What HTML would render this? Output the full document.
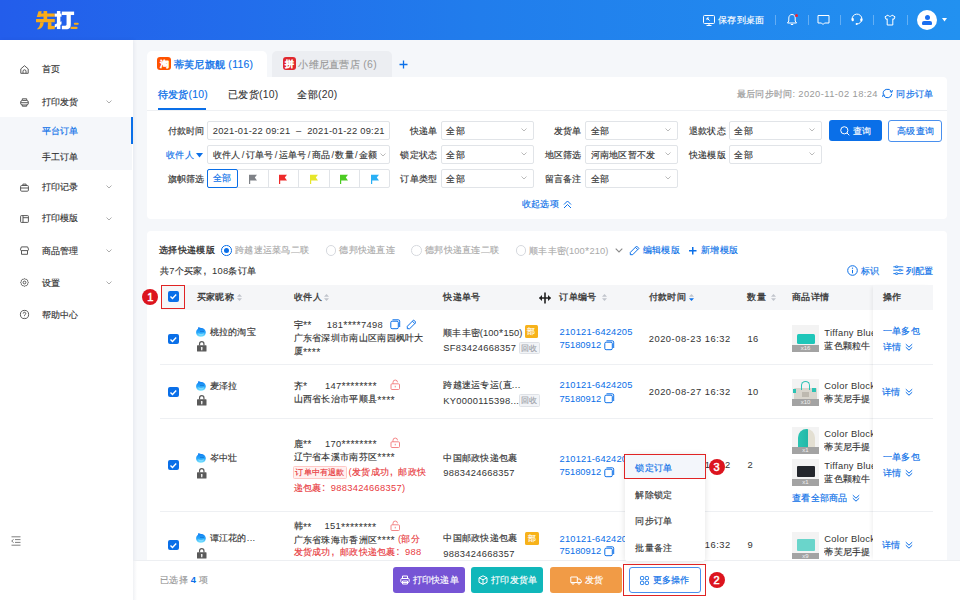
<!DOCTYPE html>
<html><head><meta charset="utf-8"><style>
*{box-sizing:border-box;margin:0;padding:0}
html,body{width:960px;height:600px;overflow:hidden}
body{font-family:"Liberation Sans",sans-serif;font-size:9.33px;letter-spacing:.3px;color:#333;background:#f5f7fa;position:relative}
.a{position:absolute;white-space:nowrap}
svg.a{overflow:visible}
.st{letter-spacing:.3px;font-size:10.6px;position:relative;top:1.3px}
.inp{position:absolute;height:18.5px;border:1px solid #e1e4e8;border-radius:2px;background:#fff;line-height:18.2px;padding-left:4.5px;color:#333;overflow:hidden;white-space:nowrap}
.inp .ch{position:absolute;right:6px;top:6px;line-height:0}
.cbx{position:absolute;width:10.7px;height:10.7px;background:#0a6fe8;border-radius:2px;line-height:0}
.tm{letter-spacing:.52px}
.c{-webkit-text-stroke:.15px}
.fw{font-style:normal;display:inline-block;width:9.2px;padding-left:.8px;font-size:10px;-webkit-text-stroke:.2px}
.m .c{-webkit-text-stroke:.3px}
.m{-webkit-text-stroke:.1px}
.on{letter-spacing:.17px}
.sl{font-style:normal;margin:0 1.1px}
</style></head><body>
<div class="a" style="left:0;top:0;width:960px;height:40px;background:linear-gradient(90deg,#235deb 0%,#217dec 50%,#2291f0 100%)"></div>
<svg class="a" style="left:30px;top:5px" width="55" height="30.02" viewBox="0 0 960 524"><g fill="#f9ac1a"><path d="M118 210L148 110H205L178 210Z"/><rect x="160" y="148" width="272" height="56"/><rect x="236" y="105" width="64" height="150"/><rect x="105" y="245" width="327" height="56"/><path d="M178 300H240C236 372 200 412 150 422H118C160 392 178 352 178 300Z"/><rect x="312" y="300" width="62" height="122"/><rect x="312" y="366" width="120" height="56"/><rect x="765" y="308" width="86" height="38" rx="19"/><rect x="705" y="380" width="126" height="40" rx="20"/></g><g fill="#fff"><rect x="432" y="150" width="118" height="54"/><rect x="470" y="105" width="60" height="315"/><path d="M432 340L550 282V336L432 392Z"/><rect x="555" y="115" width="215" height="60"/><path d="M638 170H712V330C712 395 690 422 630 422H556V362H618C632 362 638 356 638 342Z"/></g></svg>
<svg class="a" style="left:703px;top:14.5px" width="12" height="11" viewBox="0 0 12 11" fill="none" stroke="#fff" stroke-width="1"><rect x="0.5" y="0.5" width="11" height="8" rx="1"/><path d="M3.5 10.5h5M6 8.5v2M4 3l2.5 2.5M4 3h2M4 3v2"/></svg>
<div class="a" style="left:718px;top:13px;line-height:14px;color:#fff"><span class="c">保存到桌面</span></div>
<div class="a" style="left:775px;top:15px;width:1px;height:10px;background:rgba(255,255,255,.3)"></div>
<div class="a" style="left:807.5px;top:15px;width:1px;height:10px;background:rgba(255,255,255,.3)"></div>
<div class="a" style="left:840px;top:15px;width:1px;height:10px;background:rgba(255,255,255,.3)"></div>
<div class="a" style="left:873px;top:15px;width:1px;height:10px;background:rgba(255,255,255,.3)"></div>
<div class="a" style="left:906.5px;top:15px;width:1px;height:10px;background:rgba(255,255,255,.3)"></div>
<svg class="a" style="left:786px;top:13px" width="12" height="13" viewBox="0 0 12 13" fill="none" stroke="#fff" stroke-width="1"><path d="M6 1.5c-2 0-3.2 1.6-3.2 3.5v3L1.5 10h9L9.2 8V5C9.2 3.1 8 1.5 6 1.5z"/><path d="M4.8 11.5h2.4"/></svg>
<div class="a" style="left:794.5px;top:13.5px;width:3px;height:3px;border-radius:50%;background:#f5222d"></div>
<svg class="a" style="left:817px;top:14px" width="13" height="12" viewBox="0 0 13 12" fill="none" stroke="#fff" stroke-width="1"><path d="M1 1.5h11v7.5H7.5L6 10.5 4.5 9H1z"/></svg>
<svg class="a" style="left:850.6px;top:13.2px" width="12" height="13" viewBox="0 0 12 13" fill="none" stroke="#fff" stroke-width="1"><path d="M1.17 6.85A4.9 4.9 0 1 1 5.57 10.88"/><rect x=".6" y="4.9" width="2.2" height="3.4" rx="1" fill="#fff" stroke="none"/><rect x="9.3" y="5.2" width="2.1" height="3.2" rx="1" fill="#fff" stroke="none"/><circle cx="5.6" cy="10.9" r="1" fill="#fff" stroke="none"/></svg>
<svg class="a" style="left:883.5px;top:14px" width="12" height="12" viewBox="0 0 12 12" fill="none" stroke="#fff" stroke-width="1"><path d="M4 1L1 2.8 2 5.3l1.2-.5V11h5.6V4.8l1.2.5 1-2.5L8 1C7.5 2 6.8 2.4 6 2.4S4.5 2 4 1z"/></svg>
<div class="a" style="left:917px;top:10px;width:20px;height:20px;border-radius:50%;background:#fff"></div>
<div class="a" style="left:924.6px;top:15px;width:5px;height:5px;border-radius:50%;background:#1a6ef0"></div>
<div class="a" style="left:922.2px;top:21.2px;width:9.8px;height:3.8px;border-radius:2px 2px 1px 1px;background:#1a6ef0"></div>
<svg class="a" style="left:941.5px;top:18px" width="5" height="4" viewBox="0 0 5 4"><path d="M0 0h5L2.5 3.5z" fill="#fff"/></svg>
<div class="a" style="left:0;top:40px;width:133px;height:560px;background:#fff;box-shadow:1px 0 4px rgba(0,30,80,.07)"></div>
<div class="a" style="left:0;top:117px;width:132.3px;height:53px;background:#f5f7fa"></div>
<div class="a" style="left:131px;top:117px;width:2px;height:26.7px;background:#0a6fe8"></div>
<svg class="a" style="left:19.8px;top:64.9px" width="9" height="9" viewBox="0 0 9 9" fill="none" stroke="#505050" stroke-width=".95" stroke-linejoin="round"><path d="M.8 3.9L4.5.7l3.7 3.2v4.4H.8z"/><path d="M3 8.3V6.3a1.5 1.5 0 0 1 3 0v2"/></svg>
<div class="a " style="left:41.5px;top:62.30px;line-height:14px;font-size:9.33px;color:#333;"><span class="c">首页</span></div>

<svg class="a" style="left:19.9px;top:97.6px" width="9" height="9" viewBox="0 0 9 9" fill="none" stroke="#505050" stroke-width=".95" stroke-linejoin="round"><path d="M2.3 2.4V.8h4.4v1.6"/><rect x=".6" y="2.4" width="7.8" height="4.6" rx="1.9"/><path d="M.8 4.7h7.4M2.3 6.6v1.6h4.4V6.6"/></svg>
<div class="a " style="left:41.5px;top:94.60px;line-height:14px;font-size:9.33px;color:#333;"><span class="c">打印发货</span></div>

<svg class="a" style="left:106px;top:100.0px" width="6" height="4" viewBox="0 0 6 4" fill="none" stroke="#999" stroke-width=".8"><path d="M.5.5L3 3 5.5.5"/></svg>
<svg class="a" style="left:19.7px;top:182.9px" width="9" height="9" viewBox="0 0 9 9" fill="none" stroke="#505050" stroke-width=".95" stroke-linejoin="round"><rect x=".6" y="2.5" width="7.8" height="5.7" rx="1"/><path d="M2.9 2.5V1.1h3.2v1.4M.6 5h7.8"/></svg>
<div class="a " style="left:41.5px;top:179.70px;line-height:14px;font-size:9.33px;color:#333;"><span class="c">打印记录</span></div>

<svg class="a" style="left:106px;top:185.1px" width="6" height="4" viewBox="0 0 6 4" fill="none" stroke="#999" stroke-width=".8"><path d="M.5.5L3 3 5.5.5"/></svg>
<svg class="a" style="left:19.7px;top:214.6px" width="9" height="9" viewBox="0 0 9 9" fill="none" stroke="#505050" stroke-width=".95" stroke-linejoin="round"><rect x=".6" y=".6" width="7.8" height="6.8" rx=".7"/><path d="M3 .6v6.8M3 2.7h5.4"/></svg>
<div class="a " style="left:41.5px;top:211.30px;line-height:14px;font-size:9.33px;color:#333;"><span class="c">打印模版</span></div>

<svg class="a" style="left:106px;top:216.7px" width="6" height="4" viewBox="0 0 6 4" fill="none" stroke="#999" stroke-width=".8"><path d="M.5.5L3 3 5.5.5"/></svg>
<svg class="a" style="left:19.5px;top:246.2px" width="9" height="9" viewBox="0 0 9 9" fill="none" stroke="#505050" stroke-width=".95" stroke-linejoin="round"><path d="M1.4.9h6.2l.9 2.3a1.2 1.2 0 0 1-1.2 1.4H1.7A1.2 1.2 0 0 1 .5 3.2z"/><path d="M1.5 4.6v3.7h6V4.6"/></svg>
<div class="a " style="left:41.5px;top:243.70px;line-height:14px;font-size:9.33px;color:#333;"><span class="c">商品管理</span></div>

<svg class="a" style="left:106px;top:249.1px" width="6" height="4" viewBox="0 0 6 4" fill="none" stroke="#999" stroke-width=".8"><path d="M.5.5L3 3 5.5.5"/></svg>
<svg class="a" style="left:19.6px;top:278.2px" width="9" height="9" viewBox="0 0 9 9" fill="none" stroke="#505050" stroke-width=".95" stroke-linejoin="round"><path d="M7.55 5.76A1.45 1.45 0 0 1 5.76 7.55A1.45 1.45 0 0 1 3.24 7.55A1.45 1.45 0 0 1 1.45 5.76A1.45 1.45 0 0 1 1.45 3.24A1.45 1.45 0 0 1 3.24 1.45A1.45 1.45 0 0 1 5.76 1.45A1.45 1.45 0 0 1 7.55 3.24A1.45 1.45 0 0 1 7.55 5.76Z"/><circle cx="4.5" cy="4.5" r="1.4"/></svg>
<div class="a " style="left:41.5px;top:275.70px;line-height:14px;font-size:9.33px;color:#333;"><span class="c">设置</span></div>

<svg class="a" style="left:106px;top:281.1px" width="6" height="4" viewBox="0 0 6 4" fill="none" stroke="#999" stroke-width=".8"><path d="M.5.5L3 3 5.5.5"/></svg>
<svg class="a" style="left:19.5px;top:310px" width="9" height="9" viewBox="0 0 9 9" fill="none" stroke="#505050" stroke-width=".95" stroke-linejoin="round"><circle cx="4.5" cy="4.5" r="4.1"/><path d="M3.2 3.5a1.3 1.3 0 1 1 1.9 1.2c-.4.2-.6.5-.6.9v.4"/><circle cx="4.5" cy="7" r=".35" fill="#505050" stroke="none"/></svg>
<div class="a " style="left:41.5px;top:307.70px;line-height:14px;font-size:9.33px;color:#333;"><span class="c">帮助中心</span></div>

<div class="a " style="left:41.5px;top:123.60px;line-height:14px;font-size:9.33px;color:#0a6fe8;"><span class="c">平台订单</span></div>

<div class="a " style="left:41.5px;top:150.40px;line-height:14px;font-size:9.33px;color:#333;"><span class="c">手工订单</span></div>

<svg class="a" style="left:11.25px;top:536.25px" width="10" height="10" viewBox="0 0 10 10" fill="none" stroke="#606060" stroke-width=".8"><path d="M.5 .8h9M4 3.6h5.5M4 6.4h5.5M.5 9.2h9"/><path d="M2.6 3.4L.7 5l1.9 1.6"/></svg>
<div class="a" style="left:146.7px;top:51px;width:120px;height:27px;background:#fff;border-radius:5px 5px 0 0"></div>
<div class="a" style="left:157.2px;top:56.7px;width:13.8px;height:13.8px;border-radius:3px;background:#ff5200;color:#fff;font-size:9px;font-weight:bold;line-height:14.5px;text-align:center;letter-spacing:0"><span class="c">淘</span></div>
<div class="a m" style="left:173.7px;top:57.00px;line-height:15px;font-size:9.33px;color:#0a6fe8;font-size:10.4px;letter-spacing:.3px"><span class="c">蒂芙尼旗舰</span> (116)</div>

<div class="a" style="left:272px;top:51px;width:119.5px;height:26px;background:#eceef2;border-radius:5px 5px 0 0"></div>
<div class="a" style="left:282.7px;top:57.2px;width:13.3px;height:13.3px;border-radius:3px;background:#e0282e;color:#fff;font-size:9px;font-weight:bold;line-height:14px;text-align:center;letter-spacing:0"><span class="c">拼</span></div>
<div class="a " style="left:298.3px;top:57.00px;line-height:15px;font-size:9.33px;color:#999;font-size:10.4px;letter-spacing:.3px"><span class="c">小维尼直营店</span> (6)</div>

<svg class="a" style="left:399px;top:59.5px" width="9" height="9" viewBox="0 0 9 9" stroke="#0a6fe8" stroke-width="1.3"><path d="M4.5 .5v8M.5 4.5h8"/></svg>
<div class="a" style="left:147px;top:77px;width:799.7px;height:141.7px;background:#fff;border-radius:0 4px 4px 4px"></div>
<div class="a m" style="left:157.5px;top:86.70px;line-height:15px;font-size:9.33px;color:#0a6fe8;font-size:10.4px;letter-spacing:.3px"><span class="c">待发货</span>(10)</div>

<div class="a " style="left:228px;top:86.70px;line-height:15px;font-size:9.33px;color:#333;font-size:10.4px;letter-spacing:.3px"><span class="c">已发货</span>(10)</div>

<div class="a " style="left:297.3px;top:86.70px;line-height:15px;font-size:9.33px;color:#333;font-size:10.4px;letter-spacing:.3px"><span class="c">全部</span>(20)</div>

<div class="a" style="left:147px;top:110.3px;width:799.7px;height:1px;background:#eef0f3"></div>
<div class="a" style="left:157.5px;top:108.3px;width:48px;height:2px;background:#0a6fe8"></div>
<div class="a " style="left:736.7px;top:87.20px;line-height:14px;font-size:9.33px;color:#999;"><span class="c">最后同步时间</span>: <span style="letter-spacing:.42px">2020-11-02 18:24</span></div>

<svg class="a" style="left:882.4px;top:88.3px" width="11" height="11" viewBox="0 0 11 11" fill="none" stroke="#0a6fe8" stroke-width="1"><path d="M1.27 6.25A4.3 4.3 0 0 1 9.4 3.68M9.78 5.87A4.3 4.3 0 0 1 1.6 7.32"/><path d="M10.4 2.1L9.9 4.3 7.9 3.6" stroke-linejoin="round"/><path d="M.6 8.9L1.1 6.7 3.1 7.4" stroke-linejoin="round"/></svg>
<div class="a " style="left:896.3px;top:87.20px;line-height:14px;font-size:9.33px;color:#0a6fe8;"><span class="c">同步订单</span></div>

<div class="a " style="left:167.5px;top:123.80px;line-height:14px;font-size:9.33px;color:#333;"><span class="c">付款时间</span></div>

<div class="a " style="left:166px;top:147.80px;line-height:14px;font-size:9.33px;color:#0a6fe8;"><span class="c">收件人</span></div>

<svg class="a" style="left:195.5px;top:152.5px" width="7" height="5" viewBox="0 0 7 5"><path d="M0 0h7L3.5 4.5z" fill="#0a6fe8"/></svg>
<div class="a " style="left:167.5px;top:171.80px;line-height:14px;font-size:9.33px;color:#333;"><span class="c">旗帜筛选</span></div>

<div class="inp" style="left:207.2px;top:121.3px;width:182.5px;letter-spacing:.25px">2021-01-22 09:21 &nbsp;&ndash;&nbsp; 2021-01-22 09:21</div>
<div class="inp" style="left:207.2px;top:145.3px;width:182.5px"><span class="c">收件人</span><i class="sl">/</i><span class="c">订单号</span><i class="sl">/</i><span class="c">运单号</span><i class="sl">/</i><span class="c">商品</span><i class="sl">/</i><span class="c">数量</span><i class="sl">/</i><span class="c">金额</span><span class="ch" style="right:3px;top:7px"><svg width="6" height="4" viewBox="0 0 6 4" fill="none" stroke="#aaa" stroke-width=".8"><path d="M.5.5L3 3 5.5.5"/></svg></span></div>
<div class="a" style="left:207.2px;top:169.2px;width:182.5px;height:18.6px;border:1px solid #e1e4e8;border-radius:2px;background:#fff"></div>
<div class="a" style="left:207.2px;top:169.2px;width:30.6px;height:18.6px;border:1px solid #0a6fe8;border-radius:2px;color:#0a6fe8;text-align:center;line-height:17.6px"><span class="c">全部</span></div>
<div class="a" style="left:267.5px;top:170px;width:1px;height:17px;background:#e1e4e8"></div>
<div class="a" style="left:297.5px;top:170px;width:1px;height:17px;background:#e1e4e8"></div>
<div class="a" style="left:328.7px;top:170px;width:1px;height:17px;background:#e1e4e8"></div>
<div class="a" style="left:359.2px;top:170px;width:1px;height:17px;background:#e1e4e8"></div>
<svg class="a" style="left:248px;top:173.5px" width="10" height="10" viewBox="0 0 10 10"><path d="M1 .8h8L6.8 3.6 9 6.4H2.2V10H1z" fill="#7f8287"/></svg>
<svg class="a" style="left:278px;top:173.5px" width="10" height="10" viewBox="0 0 10 10"><path d="M1 .8h8L6.8 3.6 9 6.4H2.2V10H1z" fill="#ee2a2a"/></svg>
<svg class="a" style="left:308.5px;top:173.5px" width="10" height="10" viewBox="0 0 10 10"><path d="M1 .8h8L6.8 3.6 9 6.4H2.2V10H1z" fill="#e6e62a"/></svg>
<svg class="a" style="left:339px;top:173.5px" width="10" height="10" viewBox="0 0 10 10"><path d="M1 .8h8L6.8 3.6 9 6.4H2.2V10H1z" fill="#4ccb22"/></svg>
<svg class="a" style="left:369.5px;top:173.5px" width="10" height="10" viewBox="0 0 10 10"><path d="M1 .8h8L6.8 3.6 9 6.4H2.2V10H1z" fill="#2ab0f5"/></svg>
<div class="a" style="right:522.50px;top:123.80px;line-height:14px;color:#333;"><span class="c">快递单</span></div>

<div class="a" style="right:522.50px;top:147.80px;line-height:14px;color:#333;"><span class="c">锁定状态</span></div>

<div class="a" style="right:522.50px;top:171.80px;line-height:14px;color:#333;"><span class="c">订单类型</span></div>

<div class="a" style="right:378.30px;top:123.80px;line-height:14px;color:#333;"><span class="c">发货单</span></div>

<div class="a" style="right:378.30px;top:147.80px;line-height:14px;color:#333;"><span class="c">地区筛选</span></div>

<div class="a" style="right:378.30px;top:171.80px;line-height:14px;color:#333;"><span class="c">留言备注</span></div>

<div class="a" style="right:234.20px;top:123.80px;line-height:14px;color:#333;"><span class="c">退款状态</span></div>

<div class="a" style="right:234.20px;top:147.80px;line-height:14px;color:#333;"><span class="c">快递模版</span></div>

<div class="inp" style="left:440.8px;top:121.3px;width:92.9px"><span class="c">全部</span><span class="ch"><svg width="6" height="4" viewBox="0 0 6 4" fill="none" stroke="#aaa" stroke-width=".8"><path d="M.5.5L3 3 5.5.5"/></svg></span></div>
<div class="inp" style="left:440.8px;top:145.3px;width:92.9px"><span class="c">全部</span><span class="ch"><svg width="6" height="4" viewBox="0 0 6 4" fill="none" stroke="#aaa" stroke-width=".8"><path d="M.5.5L3 3 5.5.5"/></svg></span></div>
<div class="inp" style="left:440.8px;top:169.3px;width:92.9px"><span class="c">全部</span><span class="ch"><svg width="6" height="4" viewBox="0 0 6 4" fill="none" stroke="#aaa" stroke-width=".8"><path d="M.5.5L3 3 5.5.5"/></svg></span></div>
<div class="inp" style="left:585px;top:121.3px;width:92.5px"><span class="c">全部</span><span class="ch"><svg width="6" height="4" viewBox="0 0 6 4" fill="none" stroke="#aaa" stroke-width=".8"><path d="M.5.5L3 3 5.5.5"/></svg></span></div>
<div class="inp" style="left:585px;top:145.3px;width:92.5px"><span class="c">河南地区暂不发</span><span class="ch"><svg width="6" height="4" viewBox="0 0 6 4" fill="none" stroke="#aaa" stroke-width=".8"><path d="M.5.5L3 3 5.5.5"/></svg></span></div>
<div class="inp" style="left:585px;top:169.3px;width:92.5px"><span class="c">全部</span><span class="ch"><svg width="6" height="4" viewBox="0 0 6 4" fill="none" stroke="#aaa" stroke-width=".8"><path d="M.5.5L3 3 5.5.5"/></svg></span></div>
<div class="inp" style="left:728.8px;top:121.3px;width:92.9px"><span class="c">全部</span><span class="ch"><svg width="6" height="4" viewBox="0 0 6 4" fill="none" stroke="#aaa" stroke-width=".8"><path d="M.5.5L3 3 5.5.5"/></svg></span></div>
<div class="inp" style="left:728.8px;top:145.3px;width:92.9px"><span class="c">全部</span><span class="ch"><svg width="6" height="4" viewBox="0 0 6 4" fill="none" stroke="#aaa" stroke-width=".8"><path d="M.5.5L3 3 5.5.5"/></svg></span></div>
<div class="a" style="left:828.8px;top:120px;width:53.1px;height:21.2px;background:#0a6fe8;border-radius:3px"></div>
<svg class="a" style="left:839.5px;top:125.5px" width="10" height="10" viewBox="0 0 10 10" fill="none" stroke="#fff" stroke-width="1"><circle cx="4.3" cy="4.3" r="3.6"/><path d="M6.9 6.9L9.3 9.3"/></svg>
<div class="a " style="left:853px;top:123.60px;line-height:14px;font-size:9.33px;color:#fff;"><span class="c">查询</span></div>

<div class="a" style="left:888.3px;top:120px;width:53.7px;height:21.5px;border:1px solid #4a90ee;border-radius:3px;background:#fff"></div>
<div class="a " style="left:897px;top:123.80px;line-height:14px;font-size:9.33px;color:#0a6fe8;"><span class="c">高级查询</span></div>

<div class="a " style="left:521.7px;top:197.20px;line-height:14px;font-size:9.33px;color:#0a6fe8;"><span class="c">收起选项</span></div>

<svg class="a" style="left:562.5px;top:199.5px" width="9" height="9" viewBox="0 0 9 9" fill="none" stroke="#0a6fe8" stroke-width="1"><path d="M1 4.5L4.5 1 8 4.5M1 8L4.5 4.5 8 8"/></svg>
<div class="a" style="left:147px;top:231.3px;width:799.7px;height:400px;background:#fff;border-radius:4px"></div>
<div class="a m" style="left:159.2px;top:243.00px;line-height:14px;font-size:9.33px;color:#333;"><span class="c">选择快递模版</span></div>

<div class="a" style="left:221px;top:245px;width:10.6px;height:10.6px;border-radius:50%;border:1px solid #0a6fe8;background:#fff"></div><div class="a" style="left:223.6px;top:247.6px;width:5.4px;height:5.4px;border-radius:50%;background:#0a6fe8"></div>
<div class="a " style="left:235px;top:243.00px;line-height:14px;font-size:9.33px;color:#aaa;"><span class="c">跨越速运菜鸟二联</span></div>

<div class="a" style="left:325.7px;top:245px;width:10.6px;height:10.6px;border-radius:50%;border:1px solid #d6d9de;background:#fff"></div>
<div class="a " style="left:339.3px;top:243.00px;line-height:14px;font-size:9.33px;color:#aaa;"><span class="c">德邦快递直连</span></div>

<div class="a" style="left:411.4px;top:245px;width:10.6px;height:10.6px;border-radius:50%;border:1px solid #d6d9de;background:#fff"></div>
<div class="a " style="left:425px;top:243.00px;line-height:14px;font-size:9.33px;color:#aaa;"><span class="c">德邦快递直连二联</span></div>

<div class="a" style="left:515.7px;top:245px;width:10.6px;height:10.6px;border-radius:50%;border:1px solid #d6d9de;background:#fff"></div>
<div class="a " style="left:529.3px;top:243.00px;line-height:14px;font-size:9.33px;color:#aaa;letter-spacing:.12px"><span class="c">顺丰丰密</span>(100<span class="st">*</span>210)</div>

<svg class="a" style="left:614.5px;top:247.8px" width="8" height="5" viewBox="0 0 8 5" fill="none" stroke="#8a8a8a" stroke-width="1.1"><path d="M.7.7L4 4 7.3.7"/></svg>
<svg class="a" style="left:629px;top:244.5px" width="11" height="11" viewBox="0 0 11 11" fill="none" stroke="#0a6fe8" stroke-width="1"><path d="M7.6 1.1l2.3 2.3-6.2 6.3H1.3V7.4z M6.4 2.3l2.3 2.3"/></svg>
<div class="a " style="left:642.7px;top:243.00px;line-height:14px;font-size:9.33px;color:#0a6fe8;"><span class="c">编辑模版</span></div>

<svg class="a" style="left:689px;top:246.5px" width="7.5" height="7.5" viewBox="0 0 7.5 7.5" stroke="#0a6fe8" stroke-width="1.5"><path d="M3.75 0v7.5M0 3.75h7.5"/></svg>
<div class="a " style="left:701px;top:243.00px;line-height:14px;font-size:9.33px;color:#0a6fe8;"><span class="c">新增模版</span></div>

<div class="a " style="left:160px;top:263.80px;line-height:14px;font-size:9.33px;color:#333;"><span class="c">共</span>7<span class="c">个买家</span><i class="fw">,</i>108<span class="c">条订单</span></div>

<svg class="a" style="left:847px;top:265.2px" width="11" height="11" viewBox="0 0 11 11" fill="none" stroke="#0a6fe8" stroke-width="1"><circle cx="5.5" cy="5.5" r="4.8"/><path d="M5.5 4.9v3.4"/><circle cx="5.5" cy="3.2" r=".65" fill="#0a6fe8" stroke="none"/></svg>
<div class="a " style="left:861.2px;top:263.60px;line-height:14px;font-size:9.33px;color:#0a6fe8;"><span class="c">标识</span></div>

<svg class="a" style="left:892.8px;top:265.3px" width="10.5" height="10.5" viewBox="0 0 10.5 10.5" fill="none" stroke="#0a6fe8" stroke-width=".9"><path d="M.3 1.8h10M.3 5.2h10M.3 8.6h10"/><rect x="2.3" y="1" width="2.6" height="1.6" rx=".8" fill="#fff"/><rect x="5.8" y="4.4" width="2.6" height="1.6" rx=".8" fill="#fff"/><rect x="2.3" y="7.8" width="2.6" height="1.6" rx=".8" fill="#fff"/></svg>
<div class="a " style="left:905.9px;top:263.60px;line-height:14px;font-size:9.33px;color:#0a6fe8;"><span class="c">列配置</span></div>

<div class="a" style="left:161px;top:285px;width:772px;height:25px;background:#f5f6f8"></div>
<div class="cbx" style="left:168px;top:291.40px"><svg width="10.7" height="10.7" viewBox="0 0 10.7 10.7"><path d="M2.5 5.4l2 2 3.7-3.9" fill="none" stroke="#fff" stroke-width="1.4"/></svg></div>
<div class="a m" style="left:196.7px;top:290.20px;line-height:14px;font-size:9.33px;color:#333;"><span class="c">买家昵称</span></div>
<svg class="a" style="left:236.5px;top:294.0px" width="5" height="7" viewBox="0 0 5 7"><path d="M2.5 0L5 2.7H0z" fill="#c0c4cc"/><path d="M2.5 7L5 4.3H0z" fill="#c0c4cc"/></svg>
<div class="a m" style="left:294px;top:290.20px;line-height:14px;font-size:9.33px;color:#333;"><span class="c">收件人</span></div>
<svg class="a" style="left:323.5px;top:294.0px" width="5" height="7" viewBox="0 0 5 7"><path d="M2.5 0L5 2.7H0z" fill="#c0c4cc"/><path d="M2.5 7L5 4.3H0z" fill="#c0c4cc"/></svg>
<div class="a m" style="left:443.3px;top:290.20px;line-height:14px;font-size:9.33px;color:#333;"><span class="c">快递单号</span></div>

<svg class="a" style="left:538px;top:290.5px" width="14" height="14" viewBox="0 0 14 14"><path d="M7 1.5v11M1.5 7h11" stroke="#222" stroke-width="1.6"/><path d="M1 7l3-3v6zM13 7l-3-3v6z" fill="#222"/></svg>
<div class="a m" style="left:559.3px;top:290.20px;line-height:14px;font-size:9.33px;color:#333;"><span class="c">订单编号</span></div>
<svg class="a" style="left:601.5px;top:294.0px" width="5" height="7" viewBox="0 0 5 7"><path d="M2.5 0L5 2.7H0z" fill="#c0c4cc"/><path d="M2.5 7L5 4.3H0z" fill="#c0c4cc"/></svg>
<div class="a m" style="left:648.7px;top:290.20px;line-height:14px;font-size:9.33px;color:#333;"><span class="c">付款时间</span></div>
<svg class="a" style="left:688.5px;top:294.0px" width="5" height="7" viewBox="0 0 5 7"><path d="M2.5 0L5 2.7H0z" fill="#c0c4cc"/><path d="M2.5 7L5 4.3H0z" fill="#0a6fe8"/></svg>
<div class="a m" style="left:747.4px;top:290.20px;line-height:14px;font-size:9.33px;color:#333;"><span class="c">数量</span></div>
<svg class="a" style="left:771px;top:294.0px" width="5" height="7" viewBox="0 0 5 7"><path d="M2.5 0L5 2.7H0z" fill="#c0c4cc"/><path d="M2.5 7L5 4.3H0z" fill="#c0c4cc"/></svg>
<div class="a m" style="left:792px;top:290.20px;line-height:14px;font-size:9.33px;color:#333;"><span class="c">商品详情</span></div>

<div class="a" style="left:160.4px;top:364.4px;width:773px;height:1px;background:#eef0f3"></div>
<div class="a" style="left:160.4px;top:418.4px;width:773px;height:1px;background:#eef0f3"></div>
<div class="a" style="left:160.4px;top:511px;width:773px;height:1px;background:#eef0f3"></div>
<div class="cbx" style="left:168px;top:333.50px"><svg width="10.7" height="10.7" viewBox="0 0 10.7 10.7"><path d="M2.5 5.4l2 2 3.7-3.9" fill="none" stroke="#fff" stroke-width="1.4"/></svg></div><svg class="a" style="left:196.4px;top:327px" width="10" height="10" viewBox="0 0 10 10"><defs><linearGradient id="g3270" x1="0" y1="0" x2="0" y2="1"><stop offset="0" stop-color="#0f7af2"/><stop offset=".55" stop-color="#28a8fb"/><stop offset="1" stop-color="#7fe6ff"/></linearGradient></defs><path d="M2.6 .1C3.2.6 3.9.9 5 .9c2.7 0 4.8 1.9 4.8 4.5S7.7 9.8 5 9.8.1 7.9.1 5.4C.1 3.8.9 2.5 2 1.8 2 1.2 2.2.5 2.6.1z" fill="url(#g3270)"/><circle cx="5" cy="4.3" r=".55" fill="#0a4fb0"/><circle cx="7" cy="4.3" r=".55" fill="#0a4fb0"/><path d="M2.3 6.8Q5 9 7.9 6.8" stroke="#c6f6ff" stroke-width=".7" fill="none" opacity=".7"/></svg><div class="a " style="left:209.6px;top:325.00px;line-height:14px;font-size:9.33px;color:#333;"><span class="c">桃拉的淘宝</span></div>
<svg class="a" style="left:196.75px;top:341.25px" width="9.5" height="10.5" viewBox="0 0 9.5 10.5"><path d="M2.55 4.6V2.9a2.2 2.2 0 0 1 4.4 0v1.7" fill="none" stroke="#5a5a5a" stroke-width="1.2"/><rect x="0" y="4.25" width="9.5" height="6.25" rx=".6" fill="#5a5a5a"/><circle cx="4.75" cy="6.9" r=".9" fill="#fff"/><path d="M4.35 7.2h.8l.3 2h-1.4z" fill="#fff"/></svg>
<div class="a " style="left:293.6px;top:316.70px;line-height:14px;font-size:9.33px;color:#333;"><span class="c">宇</span><span class="st">**</span></div>
<div class="a " style="left:326.8px;top:316.70px;line-height:14px;font-size:9.33px;color:#333;">181<span class="st">****</span>7498</div>
<svg class="a" style="left:389.8px;top:318.5px" width="10.5" height="10.5" viewBox="0 0 10.5 10.5" fill="none" stroke="#0a6fe8" stroke-width="1"><rect x=".8" y="2.2" width="7.5" height="7.5" rx="1.3"/><path d="M2.5 .8h5.8a1.4 1.4 0 0 1 1.4 1.4V8"/></svg>
<svg class="a" style="left:405.5px;top:318.5px" width="11" height="11" viewBox="0 0 11 11" fill="none" stroke="#0a6fe8" stroke-width="1"><path d="M7.6 1l2.4 2.4-6.3 6.3H1.3V7.3z M6.4 2.2l2.4 2.4"/></svg>
<div class="a " style="left:293.6px;top:330.90px;line-height:14px;font-size:9.33px;color:#333;"><span class="c">广东省深圳市南山区南园枫叶大</span></div>
<div class="a " style="left:293.6px;top:343.30px;line-height:14px;font-size:9.33px;color:#333;"><span class="c">厦</span><span class="st">****</span></div>

<div class="a " style="left:443.3px;top:324.90px;line-height:14px;font-size:9.33px;color:#333;letter-spacing:.12px"><span class="c">顺丰丰密</span>(100<span class="st">*</span>150)</div>
<div class="a" style="left:524.6px;top:325.2px;width:13.5px;height:13.3px;background:#f7b21a;border-radius:1.5px;color:#fff;font-size:8px;line-height:13.3px;text-align:center;letter-spacing:0"><span class="c">部</span></div>
<div class="a " style="left:443.3px;top:341.10px;line-height:14px;font-size:9.33px;color:#333;">SF83424668357</div>
<div class="a" style="left:519px;top:341.7px;width:20.8px;height:12.7px;background:#f2f4f7;border:1px solid #dfe2e7;border-radius:1.5px;color:#9ea3aa;font-size:7.5px;line-height:11px;text-align:center;letter-spacing:0"><span class="c">回收</span></div>
<div class="a " style="left:559.6px;top:324.90px;line-height:14px;font-size:9.33px;color:#0a6fe8;"><span class="on">210121-6424205</span></div>
<div class="a " style="left:559.6px;top:338.40px;line-height:14px;font-size:9.33px;color:#0a6fe8;"><span style="letter-spacing:0">75180912</span></div>
<svg class="a" style="left:603.5px;top:340.2px" width="10.5" height="10.5" viewBox="0 0 10.5 10.5" fill="none" stroke="#0a6fe8" stroke-width="1"><rect x=".8" y="2.2" width="7.5" height="7.5" rx="1.3"/><path d="M2.5 .8h5.8a1.4 1.4 0 0 1 1.4 1.4V8"/></svg>
<div class="a " style="left:648.75px;top:331.75px;line-height:14px;font-size:9.33px;color:#333;"><span class="tm">2020-08-23 16:32</span></div>
<div class="a " style="left:747.5px;top:331.75px;line-height:14px;font-size:9.33px;color:#333;">16</div>

<div class="a" style="left:792px;top:325px;width:27px;height:27px;background:#f3f3f3;overflow:hidden"><div style="position:absolute;left:4.5px;top:8.7px;width:18px;height:10px;background:#1ec6b9;border-radius:1.5px"></div><div style="position:absolute;left:0;bottom:0;width:27px;height:6.8px;background:#a3a3a3;color:#f2f2f2;font-size:6px;line-height:6.8px;text-align:center;letter-spacing:0">x16</div></div><div class="a" style="left:824.25px;top:325.50px;width:48.5px;overflow:hidden;line-height:14px">Tiffany Blue</div><div class="a" style="left:824.25px;top:338.75px;width:48.5px;overflow:hidden;line-height:14px"><span class="c">蓝色颗粒牛</span></div>
<div class="cbx" style="left:168px;top:386.70px"><svg width="10.7" height="10.7" viewBox="0 0 10.7 10.7"><path d="M2.5 5.4l2 2 3.7-3.9" fill="none" stroke="#fff" stroke-width="1.4"/></svg></div><svg class="a" style="left:196.4px;top:381px" width="10" height="10" viewBox="0 0 10 10"><defs><linearGradient id="g3810" x1="0" y1="0" x2="0" y2="1"><stop offset="0" stop-color="#0f7af2"/><stop offset=".55" stop-color="#28a8fb"/><stop offset="1" stop-color="#7fe6ff"/></linearGradient></defs><path d="M2.6 .1C3.2.6 3.9.9 5 .9c2.7 0 4.8 1.9 4.8 4.5S7.7 9.8 5 9.8.1 7.9.1 5.4C.1 3.8.9 2.5 2 1.8 2 1.2 2.2.5 2.6.1z" fill="url(#g3810)"/><circle cx="5" cy="4.3" r=".55" fill="#0a4fb0"/><circle cx="7" cy="4.3" r=".55" fill="#0a4fb0"/><path d="M2.3 6.8Q5 9 7.9 6.8" stroke="#c6f6ff" stroke-width=".7" fill="none" opacity=".7"/></svg><div class="a " style="left:209.6px;top:379.00px;line-height:14px;font-size:9.33px;color:#333;"><span class="c">麦泽拉</span></div>
<svg class="a" style="left:196.75px;top:394.8px" width="9.5" height="10.5" viewBox="0 0 9.5 10.5"><path d="M2.55 4.6V2.9a2.2 2.2 0 0 1 4.4 0v1.7" fill="none" stroke="#5a5a5a" stroke-width="1.2"/><rect x="0" y="4.25" width="9.5" height="6.25" rx=".6" fill="#5a5a5a"/><circle cx="4.75" cy="6.9" r=".9" fill="#fff"/><path d="M4.35 7.2h.8l.3 2h-1.4z" fill="#fff"/></svg>
<div class="a " style="left:293.6px;top:377.80px;line-height:14px;font-size:9.33px;color:#333;"><span class="c">齐</span><span class="st">*</span></div>
<div class="a " style="left:325px;top:377.80px;line-height:14px;font-size:9.33px;color:#333;">147<span class="st">********</span></div>
<svg class="a" style="left:389.8px;top:379.3px" width="10.5" height="11" viewBox="0 0 10.5 11" fill="none" stroke="#f3797b" stroke-width=".9"><path d="M3 4.8V3.3a2.25 2.25 0 0 1 4.5 0"/><rect x="1" y="4.8" width="8.5" height="5.7" rx="1"/><path d="M5.25 6.8v1.6"/></svg>
<div class="a " style="left:293.6px;top:391.30px;line-height:14px;font-size:9.33px;color:#333;"><span class="c">山西省长治市平顺县</span><span class="st">****</span></div>

<div class="a " style="left:443.3px;top:378.00px;line-height:14px;font-size:9.33px;color:#333;"><span class="c">跨越速运专运</span>(<span class="c">直</span>...</div>
<div class="a " style="left:443.3px;top:393.60px;line-height:14px;font-size:9.33px;color:#333;">KY0000115398...</div>
<div class="a" style="left:519px;top:394.4px;width:20.8px;height:12.7px;background:#f2f4f7;border:1px solid #dfe2e7;border-radius:1.5px;color:#9ea3aa;font-size:7.5px;line-height:11px;text-align:center;letter-spacing:0"><span class="c">回收</span></div>
<div class="a " style="left:559.6px;top:378.00px;line-height:14px;font-size:9.33px;color:#0a6fe8;"><span class="on">210121-6424205</span></div>
<div class="a " style="left:559.6px;top:391.50px;line-height:14px;font-size:9.33px;color:#0a6fe8;"><span style="letter-spacing:0">75180912</span></div>
<svg class="a" style="left:603.5px;top:393.3px" width="10.5" height="10.5" viewBox="0 0 10.5 10.5" fill="none" stroke="#0a6fe8" stroke-width="1"><rect x=".8" y="2.2" width="7.5" height="7.5" rx="1.3"/><path d="M2.5 .8h5.8a1.4 1.4 0 0 1 1.4 1.4V8"/></svg>
<div class="a " style="left:648.75px;top:385.00px;line-height:14px;font-size:9.33px;color:#333;"><span class="tm">2020-08-27 16:32</span></div>
<div class="a " style="left:747.5px;top:385.00px;line-height:14px;font-size:9.33px;color:#333;">10</div>

<div class="a" style="left:792px;top:378.75px;width:27px;height:27px;background:#f3f3f3;overflow:hidden"><div style="position:absolute;left:2px;top:9px;width:23px;height:14px;background:#d8d5cd;border-radius:1px"></div><div style="position:absolute;left:9px;top:2.5px;width:9px;height:9px;border:1.6px solid #2cc3b5;border-bottom:none;border-radius:5px 5px 0 0"></div><div style="position:absolute;left:1px;top:10px;width:3px;height:4px;background:#2cc3b5"></div><div style="position:absolute;left:20px;top:9px;width:4px;height:4px;background:#2cc3b5"></div><div style="position:absolute;left:10px;top:13px;width:7px;height:5px;background:#bdb9b0"></div><div style="position:absolute;left:0;bottom:0;width:27px;height:6.8px;background:#a3a3a3;color:#f2f2f2;font-size:6px;line-height:6.8px;text-align:center;letter-spacing:0">x10</div></div><div class="a" style="left:824.25px;top:378.50px;width:48.5px;overflow:hidden;line-height:14px">Color Block</div><div class="a" style="left:824.25px;top:391.75px;width:48.5px;overflow:hidden;line-height:14px"><span class="c">蒂芙尼手提</span></div>
<div class="cbx" style="left:168px;top:459.80px"><svg width="10.7" height="10.7" viewBox="0 0 10.7 10.7"><path d="M2.5 5.4l2 2 3.7-3.9" fill="none" stroke="#fff" stroke-width="1.4"/></svg></div><svg class="a" style="left:196.4px;top:453.2px" width="10" height="10" viewBox="0 0 10 10"><defs><linearGradient id="g4532" x1="0" y1="0" x2="0" y2="1"><stop offset="0" stop-color="#0f7af2"/><stop offset=".55" stop-color="#28a8fb"/><stop offset="1" stop-color="#7fe6ff"/></linearGradient></defs><path d="M2.6 .1C3.2.6 3.9.9 5 .9c2.7 0 4.8 1.9 4.8 4.5S7.7 9.8 5 9.8.1 7.9.1 5.4C.1 3.8.9 2.5 2 1.8 2 1.2 2.2.5 2.6.1z" fill="url(#g4532)"/><circle cx="5" cy="4.3" r=".55" fill="#0a4fb0"/><circle cx="7" cy="4.3" r=".55" fill="#0a4fb0"/><path d="M2.3 6.8Q5 9 7.9 6.8" stroke="#c6f6ff" stroke-width=".7" fill="none" opacity=".7"/></svg><div class="a " style="left:209.6px;top:451.20px;line-height:14px;font-size:9.33px;color:#333;"><span class="c">岑中壮</span></div>
<svg class="a" style="left:196.75px;top:468.2px" width="9.5" height="10.5" viewBox="0 0 9.5 10.5"><path d="M2.55 4.6V2.9a2.2 2.2 0 0 1 4.4 0v1.7" fill="none" stroke="#5a5a5a" stroke-width="1.2"/><rect x="0" y="4.25" width="9.5" height="6.25" rx=".6" fill="#5a5a5a"/><circle cx="4.75" cy="6.9" r=".9" fill="#fff"/><path d="M4.35 7.2h.8l.3 2h-1.4z" fill="#fff"/></svg>
<div class="a " style="left:293.6px;top:435.50px;line-height:14px;font-size:9.33px;color:#333;"><span class="c">鹿</span><span class="st">**</span></div>
<div class="a " style="left:325.1px;top:435.50px;line-height:14px;font-size:9.33px;color:#333;">170<span class="st">********</span></div>
<svg class="a" style="left:389.8px;top:437px" width="10.5" height="11" viewBox="0 0 10.5 11" fill="none" stroke="#f3797b" stroke-width=".9"><path d="M3 4.8V3.3a2.25 2.25 0 0 1 4.5 0"/><rect x="1" y="4.8" width="8.5" height="5.7" rx="1"/><path d="M5.25 6.8v1.6"/></svg>
<div class="a " style="left:293.6px;top:449.00px;line-height:14px;font-size:9.33px;color:#333;"><span class="c">辽宁省本溪市南芬区</span><span class="st">****</span></div>

<div class="a" style="left:293.2px;top:465.8px;width:53.6px;height:12.8px;background:#fff1f0;border:1px solid #ffc8c5;border-radius:1.5px;color:#e8393d;font-size:8px;line-height:11.6px;text-align:center;letter-spacing:.2px"><span class="c">订单中有退款</span></div>
<div class="a " style="left:348.5px;top:465.00px;line-height:14px;font-size:9.33px;color:#e8393d;">(<span class="c">发货成功</span><i class="fw">,</i><span class="c">邮政快</span></div>
<div class="a " style="left:293.6px;top:481.00px;line-height:14px;font-size:9.33px;color:#e8393d;"><span class="c">递包裹</span><i class="fw">:</i>9883424668357)</div>

<div class="a " style="left:443.3px;top:450.50px;line-height:14px;font-size:9.33px;color:#333;"><span class="c">中国邮政快递包裹</span></div>
<div class="a " style="left:443.3px;top:466.00px;line-height:14px;font-size:9.33px;color:#333;">9883424668357</div>

<div class="a " style="left:559.6px;top:451.75px;line-height:14px;font-size:9.33px;color:#0a6fe8;"><span class="on">210121-6424205</span></div>
<div class="a " style="left:559.6px;top:465.00px;line-height:14px;font-size:9.33px;color:#0a6fe8;"><span style="letter-spacing:0">75180912</span></div>
<svg class="a" style="left:603.5px;top:466.8px" width="10.5" height="10.5" viewBox="0 0 10.5 10.5" fill="none" stroke="#0a6fe8" stroke-width="1"><rect x=".8" y="2.2" width="7.5" height="7.5" rx="1.3"/><path d="M2.5 .8h5.8a1.4 1.4 0 0 1 1.4 1.4V8"/></svg>
<div class="a " style="left:648.75px;top:458.00px;line-height:14px;font-size:9.33px;color:#333;"><span class="tm">2020-08-25 16:32</span></div>
<div class="a " style="left:747.5px;top:458.00px;line-height:14px;font-size:9.33px;color:#333;">2</div>

<div class="a" style="left:792px;top:427px;width:27px;height:27px;background:#f3f3f3;overflow:hidden"><div style="position:absolute;left:5.5px;top:1.5px;width:17px;height:22px;background:linear-gradient(90deg,#2bc5b3 0%,#22b8a8 58%,#e3dfd2 58%);border-radius:9px 9px 4px 4px"></div><div style="position:absolute;left:0;bottom:0;width:27px;height:6.8px;background:#a3a3a3;color:#f2f2f2;font-size:6px;line-height:6.8px;text-align:center;letter-spacing:0">x1</div></div><div class="a" style="left:824.25px;top:426.70px;width:48.5px;overflow:hidden;line-height:14px">Color Block</div><div class="a" style="left:824.25px;top:440.00px;width:48.5px;overflow:hidden;line-height:14px"><span class="c">蒂芙尼手提</span></div>
<div class="a" style="left:792px;top:459px;width:27px;height:27px;background:#f3f3f3;overflow:hidden"><div style="position:absolute;left:4.5px;top:6.5px;width:18.5px;height:11px;background:#23262c;border-radius:1px"></div><div style="position:absolute;left:0;bottom:0;width:27px;height:6.8px;background:#a3a3a3;color:#f2f2f2;font-size:6px;line-height:6.8px;text-align:center;letter-spacing:0">x1</div></div><div class="a" style="left:824.25px;top:458.70px;width:48.5px;overflow:hidden;line-height:14px">Tiffany Blue</div><div class="a" style="left:824.25px;top:472.00px;width:48.5px;overflow:hidden;line-height:14px"><span class="c">蓝色颗粒牛</span></div>
<div class="a " style="left:792px;top:490.70px;line-height:14px;font-size:9.33px;color:#0a6fe8;"><span class="c">查看全部商品</span></div>
<svg class="a" style="left:852px;top:493.7px" width="8" height="8" viewBox="0 0 8 8" fill="none" stroke="#0a6fe8" stroke-width="1"><path d="M.8 1.2L4 4.2 7.2 1.2M.8 4.2L4 7.2 7.2 4.2"/></svg>
<div class="cbx" style="left:168px;top:539.80px"><svg width="10.7" height="10.7" viewBox="0 0 10.7 10.7"><path d="M2.5 5.4l2 2 3.7-3.9" fill="none" stroke="#fff" stroke-width="1.4"/></svg></div><svg class="a" style="left:196.4px;top:533.2px" width="10" height="10" viewBox="0 0 10 10"><defs><linearGradient id="g5332" x1="0" y1="0" x2="0" y2="1"><stop offset="0" stop-color="#0f7af2"/><stop offset=".55" stop-color="#28a8fb"/><stop offset="1" stop-color="#7fe6ff"/></linearGradient></defs><path d="M2.6 .1C3.2.6 3.9.9 5 .9c2.7 0 4.8 1.9 4.8 4.5S7.7 9.8 5 9.8.1 7.9.1 5.4C.1 3.8.9 2.5 2 1.8 2 1.2 2.2.5 2.6.1z" fill="url(#g5332)"/><circle cx="5" cy="4.3" r=".55" fill="#0a4fb0"/><circle cx="7" cy="4.3" r=".55" fill="#0a4fb0"/><path d="M2.3 6.8Q5 9 7.9 6.8" stroke="#c6f6ff" stroke-width=".7" fill="none" opacity=".7"/></svg><div class="a " style="left:209.6px;top:531.20px;line-height:14px;font-size:9.33px;color:#333;"><span class="c">谭江花的</span>...</div>
<svg class="a" style="left:196.75px;top:547.5px" width="9.5" height="10.5" viewBox="0 0 9.5 10.5"><path d="M2.55 4.6V2.9a2.2 2.2 0 0 1 4.4 0v1.7" fill="none" stroke="#5a5a5a" stroke-width="1.2"/><rect x="0" y="4.25" width="9.5" height="6.25" rx=".6" fill="#5a5a5a"/><circle cx="4.75" cy="6.9" r=".9" fill="#fff"/><path d="M4.35 7.2h.8l.3 2h-1.4z" fill="#fff"/></svg>
<div class="a " style="left:293.6px;top:518.30px;line-height:14px;font-size:9.33px;color:#333;"><span class="c">韩</span><span class="st">**</span></div>
<div class="a " style="left:324.6px;top:518.30px;line-height:14px;font-size:9.33px;color:#333;">151<span class="st">********</span></div>
<svg class="a" style="left:389.8px;top:519.8px" width="10.5" height="11" viewBox="0 0 10.5 11" fill="none" stroke="#f3797b" stroke-width=".9"><path d="M3 4.8V3.3a2.25 2.25 0 0 1 4.5 0"/><rect x="1" y="4.8" width="8.5" height="5.7" rx="1"/><path d="M5.25 6.8v1.6"/></svg>
<div class="a " style="left:293.6px;top:531.80px;line-height:14px;font-size:9.33px;color:#333;"><span class="c">广东省珠海市香洲区</span><span class="st">****</span></div>
<div class="a " style="left:398px;top:531.80px;line-height:14px;font-size:9.33px;color:#e8393d;">(<span class="c">部分</span></div>

<div class="a " style="left:293.6px;top:545.10px;line-height:14px;font-size:9.33px;color:#e8393d;"><span class="c">发货成功</span><i class="fw">,</i><span class="c">邮政快递包裹</span><i class="fw">:</i>988</div>

<div class="a " style="left:443.3px;top:530.50px;line-height:14px;font-size:9.33px;color:#333;"><span class="c">中国邮政快递包裹</span></div>
<div class="a" style="left:525px;top:532px;width:13.5px;height:13.3px;background:#f7b21a;border-radius:1.5px;color:#fff;font-size:8px;line-height:13.3px;text-align:center;letter-spacing:0"><span class="c">部</span></div>
<div class="a " style="left:443.3px;top:546.75px;line-height:14px;font-size:9.33px;color:#333;">9883424668357</div>

<div class="a " style="left:559.6px;top:531.75px;line-height:14px;font-size:9.33px;color:#0a6fe8;"><span class="on">210121-6424205</span></div>
<div class="a " style="left:559.6px;top:544.25px;line-height:14px;font-size:9.33px;color:#0a6fe8;"><span style="letter-spacing:0">75180912</span></div>
<svg class="a" style="left:603.5px;top:546px" width="10.5" height="10.5" viewBox="0 0 10.5 10.5" fill="none" stroke="#0a6fe8" stroke-width="1"><rect x=".8" y="2.2" width="7.5" height="7.5" rx="1.3"/><path d="M2.5 .8h5.8a1.4 1.4 0 0 1 1.4 1.4V8"/></svg>
<div class="a " style="left:648.75px;top:538.00px;line-height:14px;font-size:9.33px;color:#333;"><span class="tm">2020-08-23 16:32</span></div>
<div class="a " style="left:747.5px;top:538.00px;line-height:14px;font-size:9.33px;color:#333;">9</div>

<div class="a" style="left:792px;top:532.3px;width:27px;height:27px;background:#f3f3f3;overflow:hidden"><div style="position:absolute;left:4.5px;top:6.5px;width:18.5px;height:12px;background:#6ad5cb;border-radius:1px"></div><div style="position:absolute;left:0;bottom:0;width:27px;height:6.8px;background:#a3a3a3;color:#f2f2f2;font-size:6px;line-height:6.8px;text-align:center;letter-spacing:0">x9</div></div><div class="a" style="left:824.25px;top:532.00px;width:48.5px;overflow:hidden;line-height:14px">Color Block</div><div class="a" style="left:824.25px;top:545.30px;width:48.5px;overflow:hidden;line-height:14px"><span class="c">蒂芙尼手提</span></div>
<div class="a" style="left:872.5px;top:285px;width:60.5px;height:275px;box-shadow:-3px 0 4px -2px rgba(0,0,0,.07)"></div>
<div class="a m" style="left:883px;top:290.20px;line-height:14px;font-size:9.33px;color:#333;"><span class="c">操作</span></div>

<div class="a " style="left:882.9px;top:324.10px;line-height:14px;font-size:9.33px;color:#0a6fe8;"><span class="c">一单多包</span></div>
<div class="a " style="left:882.9px;top:339.70px;line-height:14px;font-size:9.33px;color:#0a6fe8;"><span class="c">详情</span></div>
<svg class="a" style="left:905.3px;top:342.7px" width="8" height="8" viewBox="0 0 8 8" fill="none" stroke="#0a6fe8" stroke-width="1"><path d="M.8 1.2L4 4.2 7.2 1.2M.8 4.2L4 7.2 7.2 4.2"/></svg>
<div class="a " style="left:882px;top:385.00px;line-height:14px;font-size:9.33px;color:#0a6fe8;"><span class="c">详情</span></div>
<svg class="a" style="left:904.5px;top:388px" width="8" height="8" viewBox="0 0 8 8" fill="none" stroke="#0a6fe8" stroke-width="1"><path d="M.8 1.2L4 4.2 7.2 1.2M.8 4.2L4 7.2 7.2 4.2"/></svg>
<div class="a " style="left:882.9px;top:450.10px;line-height:14px;font-size:9.33px;color:#0a6fe8;"><span class="c">一单多包</span></div>
<div class="a " style="left:882.9px;top:466.10px;line-height:14px;font-size:9.33px;color:#0a6fe8;"><span class="c">详情</span></div>
<svg class="a" style="left:905.3px;top:469.1px" width="8" height="8" viewBox="0 0 8 8" fill="none" stroke="#0a6fe8" stroke-width="1"><path d="M.8 1.2L4 4.2 7.2 1.2M.8 4.2L4 7.2 7.2 4.2"/></svg>
<div class="a " style="left:882px;top:537.90px;line-height:14px;font-size:9.33px;color:#0a6fe8;"><span class="c">详情</span></div>
<svg class="a" style="left:904.5px;top:540.9px" width="8" height="8" viewBox="0 0 8 8" fill="none" stroke="#0a6fe8" stroke-width="1"><path d="M.8 1.2L4 4.2 7.2 1.2M.8 4.2L4 7.2 7.2 4.2"/></svg>
<div class="a" style="left:133.3px;top:560px;width:826.7px;height:40px;background:#fff;border-top:1px solid #edeff2"></div>
<div class="a" style="left:133px;top:561px;width:4px;height:39px;background:linear-gradient(90deg,rgba(0,30,80,.06),rgba(0,30,80,0))"></div>
<div class="a " style="left:160px;top:573.00px;line-height:14px;font-size:9.33px;color:#999;"><span class="c">已选择</span> <span style="color:#0a6fe8;font-weight:bold">4</span> <span class="c">项</span></div>

<div class="a" style="left:393px;top:566.75px;width:71.5px;height:26.5px;background:#7654d5;border-radius:3px"></div>
<svg class="a" style="left:399.5px;top:575px" width="10" height="10" viewBox="0 0 10 10" fill="none" stroke="#fff" stroke-width="1"><path d="M2.5 3.5V1h5v2.5"/><rect x="0.8" y="3.5" width="8.4" height="4" rx="1"/><path d="M2.5 6h5v3h-5z"/></svg>
<div class="a " style="left:412.5px;top:573.00px;line-height:14px;font-size:9.33px;color:#fff;"><span class="c">打印快递单</span></div>

<div class="a" style="left:471.25px;top:566.75px;width:71.75px;height:26.5px;background:#10b7ba;border-radius:3px"></div>
<svg class="a" style="left:477.5px;top:575px" width="10" height="10" viewBox="0 0 10 10" fill="none" stroke="#fff" stroke-width="1"><path d="M5 .8L9 2.8v4.5L5 9.3 1 7.3V2.8z M1 2.8L5 4.8 9 2.8M5 4.8v4.5"/></svg>
<div class="a " style="left:491px;top:573.00px;line-height:14px;font-size:9.33px;color:#fff;"><span class="c">打印发货单</span></div>

<div class="a" style="left:550.2px;top:566.75px;width:71.5px;height:26.5px;background:#f19b46;border-radius:3px"></div>
<svg class="a" style="left:570px;top:575.5px" width="12" height="9" viewBox="0 0 12 9" fill="none" stroke="#fff" stroke-width="1"><path d="M.8 1h6.5v5.5H.8zM7.3 3h2.5l1.5 2v1.5H7.3"/><circle cx="3" cy="7.3" r="1"/><circle cx="9" cy="7.3" r="1"/></svg>
<div class="a " style="left:585px;top:573.00px;line-height:14px;font-size:9.33px;color:#fff;"><span class="c">发货</span></div>

<div class="a" style="left:628.5px;top:566.5px;width:72.3px;height:26.6px;background:#fff;border:1px solid #4a90ee;border-radius:3px"></div>
<svg class="a" style="left:640px;top:575.5px" width="9" height="9" viewBox="0 0 9 9" fill="none" stroke="#0a6fe8" stroke-width=".9"><rect x=".5" y=".5" width="3.2" height="3.2" rx=".8"/><rect x="5.3" y=".5" width="3.2" height="3.2" rx=".8"/><rect x=".5" y="5.3" width="3.2" height="3.2" rx=".8"/><rect x="5.3" y="5.3" width="3.2" height="3.2" rx=".8"/></svg>
<div class="a " style="left:652.5px;top:573.00px;line-height:14px;font-size:9.33px;color:#0a6fe8;"><span class="c">更多操作</span></div>

<div class="a" style="left:624.5px;top:453.5px;width:80.5px;height:107.5px;background:#fff;box-shadow:0 1px 6px rgba(0,0,0,.12);border-radius:2px"></div>
<div class="a" style="left:625px;top:455px;width:80px;height:24px;background:#f3f6fb"></div>
<div class="a " style="left:635.4px;top:461.00px;line-height:14px;font-size:9.33px;color:#0a6fe8;"><span class="c">锁定订单</span></div>
<div class="a " style="left:635.4px;top:487.50px;line-height:14px;font-size:9.33px;color:#333;"><span class="c">解除锁定</span></div>
<div class="a " style="left:635.4px;top:514.30px;line-height:14px;font-size:9.33px;color:#333;"><span class="c">同步订单</span></div>
<div class="a " style="left:635.4px;top:541.10px;line-height:14px;font-size:9.33px;color:#333;"><span class="c">批量备注</span></div>

<div class="a" style="left:161.3px;top:285.3px;width:23.70px;height:23.50px;border:1.5px solid #e02424"></div><div class="a" style="left:142.30px;top:289.20px;width:16px;height:16px;border-radius:50%;background:#dc141e;color:#fff;font-size:11px;-webkit-text-stroke:.5px #fff;line-height:16.5px;text-align:center;letter-spacing:0">1</div>
<div class="a" style="left:623.5px;top:454.4px;width:82.20px;height:24.70px;border:1.5px solid #e02424"></div><div class="a" style="left:708.50px;top:459.40px;width:16px;height:16px;border-radius:50%;background:#dc141e;color:#fff;font-size:11px;-webkit-text-stroke:.5px #fff;line-height:16.5px;text-align:center;letter-spacing:0">3</div>
<div class="a" style="left:623.1px;top:563.75px;width:82.50px;height:31.85px;border:1.5px solid #e02424"></div><div class="a" style="left:708.50px;top:572.40px;width:16px;height:16px;border-radius:50%;background:#dc141e;color:#fff;font-size:11px;-webkit-text-stroke:.5px #fff;line-height:16.5px;text-align:center;letter-spacing:0">2</div>
</body></html>
